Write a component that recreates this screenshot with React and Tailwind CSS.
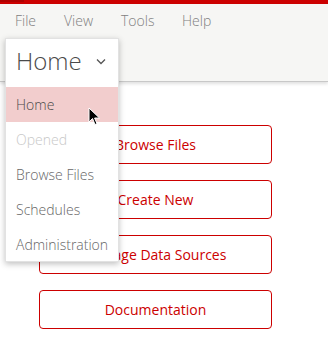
import React from "react";

export default function App() {
  const buttons = ["Browse Files", "Create New", "Manage Data Sources", "Documentation"];
  const items = [
    { t: "Home", active: true },
    { t: "Opened", disabled: true },
    { t: "Browse Files" },
    { t: "Schedules" },
    { t: "Administration" },
  ];
  return (
    <div className="relative w-[328px] h-[357px] bg-white overflow-hidden font-['Open_Sans',sans-serif]">
      <div className="h-[4px] bg-[#cc0000] flex">
        <div className="w-[24px] h-[2px] bg-[#b00000]" />
      </div>
      <div className="h-[78px] bg-[#f6f6f4] border-b border-[#c8c8c8] shadow-[0_2px_3px_rgba(0,0,0,0.12)]">
        <div className="flex h-[32px] items-center pl-[15px] text-[14px] text-[#808080] font-light">
          <span className="w-[49px]">File</span>
          <span className="w-[57px]">View</span>
          <span className="w-[61px]">Tools</span>
          <span>Help</span>
        </div>
      </div>
      <div className="flex flex-col gap-[16px] ml-[39px] w-[233px] pt-[43px]">
        {buttons.map((b) => (
          <div
            key={b}
            className="h-[39px] flex items-center justify-center border border-[#cc0000] rounded-[4px] text-[14px] text-[#cc0000]"
          >
            {b}
          </div>
        ))}
      </div>
      <div className="absolute left-[5px] top-[38px] w-[114px] h-[224px] bg-white border border-[#e2e2e2] shadow-[0_2px_6px_rgba(0,0,0,0.25)]">
        <div className="h-[48px] flex items-center pl-[10px] pr-[12px] pb-[5px] justify-between">
          <span className="text-[24px] text-[#4a4a4a] leading-none font-light">Home</span>
          <svg width="10" height="7" viewBox="0 0 10 7" className="mt-[1px]">
            <path d="M1 1.5 L5 5.5 L9 1.5" fill="none" stroke="#555" strokeWidth="1.3" />
          </svg>
        </div>
        <div className="flex flex-col">
          {items.map((it) => (
            <div
              key={it.t}
              className={
                "h-[35px] flex items-center pl-[10px] text-[14px] font-light " +
                (it.active ? "bg-[#f2cdcd] text-[#4a4a4a]" : it.disabled ? "text-[#c8c8c8]" : "text-[#666]")
              }
            >
              {it.t}
            </div>
          ))}
        </div>
      </div>
      <svg className="absolute left-[88px] top-[107px]" width="14" height="19" viewBox="0 0 14 19">
        <path d="M1 1 L1 15 L4.5 11.5 L7 17.5 L9 16.7 L6.6 11 L11.5 11 Z" fill="#000" stroke="#fff" strokeWidth="1" />
      </svg>
    </div>
  );
}
